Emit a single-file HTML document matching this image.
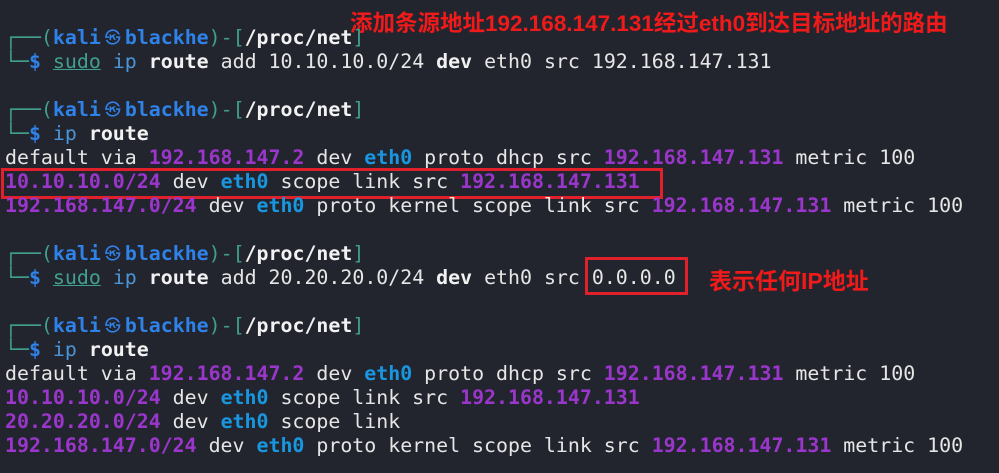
<!DOCTYPE html>
<html><head><meta charset="utf-8"><style>
html,body{margin:0;padding:0;background:#23252e;width:999px;height:473px;overflow:hidden}
pre{position:absolute;left:5px;top:26px;margin:0;font-family:"DejaVu Sans Mono","Liberation Mono",monospace;font-size:19.9px;line-height:24px;color:#e6e6e6;white-space:pre}
.t{color:#3fa08e}.k{color:#2f82e8;font-weight:bold}.w{color:#f2f2f2;font-weight:bold}
.p{color:#9b36cc;font-weight:bold}.e{color:#1896e0;font-weight:bold}.i{color:#4a94d8}
.s{color:#3fa08e;text-decoration:underline}.d{color:#2f82e8;font-weight:bold}
.sk{display:inline-block;width:24px;text-align:center;color:#2f82e8;font-size:16px;vertical-align:top}
.box{position:absolute;border:3px solid #e0202a}
.ann{position:absolute;color:#f01a1a;font-family:"Liberation Sans","Noto Sans CJK SC",sans-serif;font-weight:bold;font-size:22.5px;white-space:nowrap}
</style></head><body>
<div class="ann" style="left:350px;top:6px">添加条源地址192.168.147.131经过eth0到达目标地址的路由</div>
<div class="ann" style="left:709px;top:262px;font-size:23px">表示任何IP地址</div>
<div class="box" style="left:1px;top:168px;width:656px;height:25px"></div>
<div class="box" style="left:585px;top:257px;width:97px;height:32px"></div>
<pre><span class="t">┌──(</span><span class="k">kali</span><span class="sk">㉿</span><span class="k">blackhe</span><span class="t">)-[</span><span class="w">/proc/net</span><span class="t">]</span>
<span class="t">└─</span><span class="d">$</span> <span class="s">sudo</span> <span class="i">ip</span> <span class="w">route</span> add 10.10.10.0/24 <span class="w">dev</span> eth0 src 192.168.147.131

<span class="t">┌──(</span><span class="k">kali</span><span class="sk">㉿</span><span class="k">blackhe</span><span class="t">)-[</span><span class="w">/proc/net</span><span class="t">]</span>
<span class="t">└─</span><span class="d">$</span> <span class="i">ip</span> <span class="w">route</span>
default via <span class="p">192.168.147.2</span> dev <span class="e">eth0</span> proto dhcp src <span class="p">192.168.147.131</span> metric 100
<span class="p">10.10.10.0/24</span> dev <span class="e">eth0</span> scope link src <span class="p">192.168.147.131</span>
<span class="p">192.168.147.0/24</span> dev <span class="e">eth0</span> proto kernel scope link src <span class="p">192.168.147.131</span> metric 100

<span class="t">┌──(</span><span class="k">kali</span><span class="sk">㉿</span><span class="k">blackhe</span><span class="t">)-[</span><span class="w">/proc/net</span><span class="t">]</span>
<span class="t">└─</span><span class="d">$</span> <span class="s">sudo</span> <span class="i">ip</span> <span class="w">route</span> add 20.20.20.0/24 <span class="w">dev</span> eth0 src 0.0.0.0

<span class="t">┌──(</span><span class="k">kali</span><span class="sk">㉿</span><span class="k">blackhe</span><span class="t">)-[</span><span class="w">/proc/net</span><span class="t">]</span>
<span class="t">└─</span><span class="d">$</span> <span class="i">ip</span> <span class="w">route</span>
default via <span class="p">192.168.147.2</span> dev <span class="e">eth0</span> proto dhcp src <span class="p">192.168.147.131</span> metric 100
<span class="p">10.10.10.0/24</span> dev <span class="e">eth0</span> scope link src <span class="p">192.168.147.131</span>
<span class="p">20.20.20.0/24</span> dev <span class="e">eth0</span> scope link
<span class="p">192.168.147.0/24</span> dev <span class="e">eth0</span> proto kernel scope link src <span class="p">192.168.147.131</span> metric 100</pre>
</body></html>
